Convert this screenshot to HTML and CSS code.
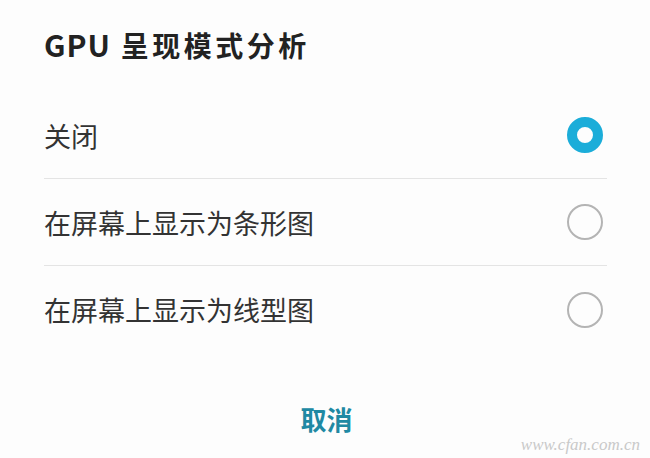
FILE: index.html
```html
<!DOCTYPE html>
<html lang="zh-CN">
<head>
    <meta charset="UTF-8">
    <title>GPU 呈现模式分析</title>
    <link rel="stylesheet" href="styles.css">
</head>
<body>
<div class="dialog">
    <h2 class="dialog-title"><span class="latin">GPU</span> 呈现模式分析</h2>
    <ul class="options">
        <li class="option">
            <span class="option-label">关闭</span>
            <span class="radio checked"></span>
        </li>
        <li class="option">
            <span class="option-label">在屏幕上显示为条形图</span>
            <span class="radio"></span>
        </li>
        <li class="option">
            <span class="option-label">在屏幕上显示为线型图</span>
            <span class="radio"></span>
        </li>
    </ul>
    <div class="actions">
        <button class="cancel">取消</button>
    </div>
    <div class="watermark">www.cfan.com.cn</div>
</div>
</body>
</html>
```

FILE: styles.css
```css
* { box-sizing: border-box; }
body {
    margin: 0;
    background: #fff;
    font-family: "Noto Sans CJK SC", "Noto Sans", sans-serif;
    color: #2a2a2a;
}
.dialog {
    position: relative;
    width: 650px;
    height: 458px;
    padding: 0 43px 0 44px;
    background: #fdfdfd;
}
.dialog-title {
    margin: 0;
    padding-top: 23px;
    height: 92px;
    line-height: 42px;
    font-size: 28px;
    font-weight: 700;
    letter-spacing: 3.5px;
    color: #222;
}
.dialog-title .latin {
    font-size: 30px;
    letter-spacing: 1px;
}
.options {
    list-style: none;
    margin: 0;
    padding: 0;
}
.option {
    display: flex;
    align-items: center;
    justify-content: space-between;
    height: 87px;
    border-bottom: 1px solid #e4e4e4;
}
.option:last-child {
    border-bottom: none;
}
.option-label {
    font-size: 27px;
    color: #333;
}
.radio {
    width: 36px;
    height: 36px;
    margin-right: 4px;
    border: 2px solid #b4b4b4;
    border-radius: 50%;
}
.radio.checked {
    border: 10px solid #1badd9;
}
.actions {
    display: flex;
    justify-content: center;
    padding-top: 44px;
}
.cancel {
    padding: 0 0 0 2px;
    border: none;
    background: none;
    font-family: inherit;
    font-size: 26px;
    font-weight: 700;
    line-height: 44px;
    color: #2089a3;
}
.watermark {
    position: absolute;
    right: 10px;
    bottom: 3px;
    font-family: "Liberation Serif", serif;
    font-style: italic;
    font-size: 17px;
    color: #c9c9c9;
}
```
